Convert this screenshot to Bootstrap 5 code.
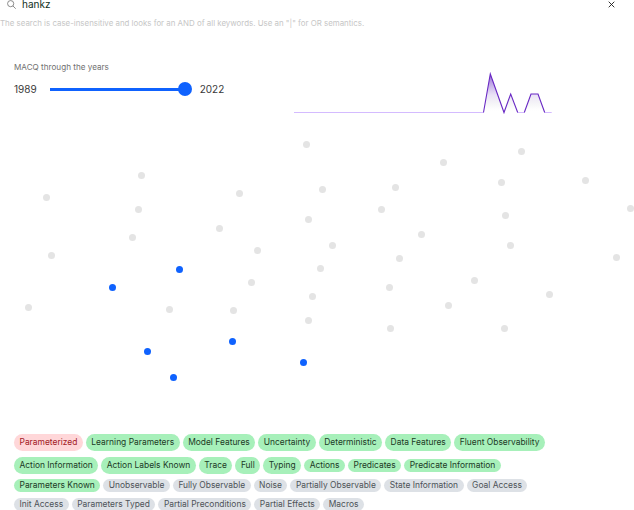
<!DOCTYPE html>
<html lang="en">
  <head>
    <meta charset="UTF-8" />
    <meta name="viewport" content="width=device-width, initial-scale=1.0" />
    <title>Planning domains</title>
    <link href="https://cdn.jsdelivr.net/npm/bootstrap@5.3.3/dist/css/bootstrap.min.css" rel="stylesheet" />
    <style>
      html, body { height: 510px; overflow: hidden; background: #fff; }
      body { font-family: "Inter", "Liberation Sans", sans-serif; color: #161616; }
      .search-row { height: 9px; padding: 0 19px 0 7px; line-height: 9px; }
      .search-text { font-size: 10px; color: #10301c; margin-left: 6px; }
      .helper-text { font-size: 7.9px; line-height: 12px; color: #c6c6c6; margin-top: 8px; white-space: nowrap; }
      .years-block { margin-top: 32px; height: 58px; }
      .years-left { width: 294px; padding-left: 14px; flex: none; }
      .years-label { font-size: 8.15px; line-height: 12px; color: #6f6f6f; }
      .slider-row { font-size: 10px; line-height: 12px; color: #393939; margin-top: 10px; }
      .slider-track { width: 135px; height: 3px; background: #0f62fe; margin: 0 7px 0 13px; position: relative; }
      .slider-thumb { position: absolute; right: -7px; top: -6px; width: 14px; height: 14px; border-radius: 50%; background: #0f62fe; }
      .scatter { position: relative; height: 315px; }
      .dot { position: absolute; width: 7px; height: 7px; border-radius: 50%; background: #e4e4e4; margin: -3.5px 0 0 -3.5px; }
      .dot-on { background: #0f62fe; }
      .tag-wrap { width: 550px; margin: 0 0 0 14px; row-gap: 5.5px; column-gap: 3px; align-items: center; }
      .tag-pill { font-size: 8.43px; line-height: 13px; height: 13px; padding: 0 5.5px; border-radius: 9px; white-space: nowrap; }
      .tag-tall { height: 17px; line-height: 17px; }
      .tag-green { background: #a7f0ba; color: #1c3a26; }
      .tag-red { background: #ffd7d9; color: #a2191f; }
      .tag-gray { background: #dde1e6; color: #4d5358; }
    </style>
  </head>
  <body>
    <div class="d-flex align-items-center search-row">
      <svg width="9" height="9" viewBox="0 0 16 16" fill="none" stroke="#6f6f6f" stroke-width="1.4"><circle cx="6.5" cy="6.5" r="5.5"/><path d="M10.5 10.5 15.5 15.5"/></svg>
      <span class="search-text">hankz</span>
      <svg class="ms-auto" width="7" height="7" viewBox="0 0 8 8" fill="none" stroke="#161616" stroke-width="1"><path d="M.8.8l6.4 6.4M7.2.8.8 7.2"/></svg>
    </div>
    <div class="helper-text">The search is case-insensitive and looks for an AND of all keywords. Use an "|" for OR semantics.</div>

    <div class="d-flex years-block">
      <div class="years-left">
        <div class="years-label">MACQ through the years</div>
        <div class="d-flex align-items-center slider-row">
          <span>1989</span>
          <div class="slider-track"><div class="slider-thumb"></div></div>
          <span class="ms-2">2022</span>
        </div>
      </div>
      <svg width="262" height="58" viewBox="294 61 262 58">
        <defs>
          <linearGradient id="areaFill" gradientUnits="userSpaceOnUse" x1="0" y1="74" x2="0" y2="112">
            <stop offset="0" stop-color="#6929c4" stop-opacity=".7" />
            <stop offset=".55" stop-color="#8a5fd0" stop-opacity=".18" />
            <stop offset=".85" stop-color="#8a8a9a" stop-opacity=".05" />
            <stop offset="1" stop-color="#fff" stop-opacity="0" />
          </linearGradient>
        </defs>
        <path d="M483.5 112.5 490.3 74 504 112.5 510.7 94 517.7 112.5H524.3L531 94H538L544.7 112.5Z" fill="url(#areaFill)" />
        <path d="M294 112.5H483.5M517.7 112.5H524.3M544.7 112.5H551.7" stroke="#d4bbff" stroke-width="1" fill="none" />
        <path d="M483.5 112.5 490.3 74 504 112.5 510.7 94 517.7 112.5M524.3 112.5 531 94H538L544.7 112.5" stroke="#6929c4" stroke-width="1.1" fill="none" />
      </svg>
    </div>

    <div class="scatter" id="scatter"></div>

    <div class="d-flex flex-wrap tag-wrap" id="tags"></div>

    <script>
      // dots: x, y in page coordinates, the scatter starts at y=119
      const top0 = 119;
      const gray = [[306,144.3],[141.3,175.7],[239.3,193.7],[46.7,197.3],[138.7,209.3],[308,219.7],[219,228.7],[132.3,237],[257.3,250.3],[51,255.7],[251,282.3],[312,296.3],[28.3,307],[169.7,309],[233,310.3],[308.3,320],
        [521.3,151.7],[443.7,162],[585.3,180],[501.3,182.3],[395,187],[322,189.3],[381.7,209.3],[630,208.3],[505.3,215.3],[421.3,234],[510.3,245.3],[332.7,245.3],[399,258.7],[616,257.3],[320.7,268.3],[474.7,280.7],[389.7,287.7],[549.3,294.3],[448,305],[504,328],[390.3,328]];
      const blue = [[179.3,269],[112.3,287],[232.3,341.3],[147.7,351.3],[303.3,362.7],[173.3,377.3]];
      const scatter = document.getElementById("scatter");
      function addDot(p, cls) {
        const d = document.createElement("div");
        d.className = cls;
        d.style.left = p[0] + "px";
        d.style.top = p[1] - top0 + "px";
        scatter.appendChild(d);
      }
      gray.forEach((p) => addDot(p, "dot"));
      blue.forEach((p) => addDot(p, "dot dot-on"));

      // tags: label, colour, tall
      const tags = [
        ["Parameterized","red",1],["Learning Parameters","green",1],["Model Features","green",1],["Uncertainty","green",1],["Deterministic","green",1],["Data Features","green",1],["Fluent Observability","green",1],
        ["Action Information","green",1],["Action Labels Known","green",1],["Trace","green",1],["Full","green",1],["Typing","green",1],["Actions","green",0],["Predicates","green",0],["Predicate Information","green",0],
        ["Parameters Known","green",0],["Unobservable","gray",0],["Fully Observable","gray",0],["Noise","gray",0],["Partially Observable","gray",0],["State Information","gray",0],["Goal Access","gray",0],
        ["Init Access","gray",0],["Parameters Typed","gray",0],["Partial Preconditions","gray",0],["Partial Effects","gray",0],["Macros","gray",0],
      ];
      const wrap = document.getElementById("tags");
      tags.forEach((t) => {
        const s = document.createElement("span");
        s.className = "tag-pill tag-" + t[1] + (t[2] ? " tag-tall" : "");
        s.textContent = t[0];
        wrap.appendChild(s);
      });
    </script>
    <script src="https://cdn.jsdelivr.net/npm/bootstrap@5.3.3/dist/js/bootstrap.bundle.min.js"></script>
  </body>
</html>
